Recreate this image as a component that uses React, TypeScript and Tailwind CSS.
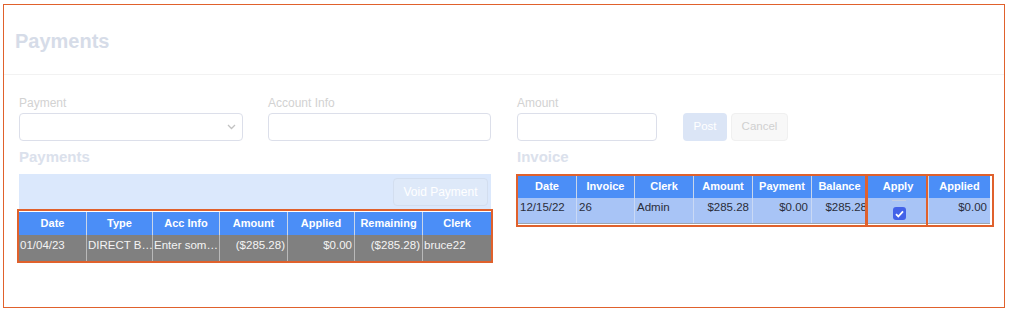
import React from "react";

type Col = { label: string; w: number; align?: "left" | "right" };

const payCols: Col[] = [
  { label: "Date", w: 67 },
  { label: "Type", w: 66 },
  { label: "Acc Info", w: 67 },
  { label: "Amount", w: 68, align: "right" },
  { label: "Applied", w: 67, align: "right" },
  { label: "Remaining", w: 68, align: "right" },
  { label: "Clerk", w: 69 },
];
const payRow = ["01/04/23", "DIRECT B…", "Enter som…", "($285.28)", "$0.00", "($285.28)", "bruce22"];

const invCols: Col[] = [
  { label: "Date", w: 58 },
  { label: "Invoice", w: 58 },
  { label: "Clerk", w: 59 },
  { label: "Amount", w: 59, align: "right" },
  { label: "Payment", w: 59, align: "right" },
  { label: "Balance", w: 56, align: "right" },
  { label: "Apply", w: 61 },
  { label: "Applied", w: 62, align: "right" },
];
const invRow = ["12/15/22", "26", "Admin", "$285.28", "$0.00", "$285.28", "", "$0.00"];

function Field({ label, width, chevron }: { label: string; width: number; chevron?: boolean }) {
  return (
    <div style={{ width }}>
      <div className="mb-[2px] text-[12px] leading-[16px] text-[#d2d2d2]">{label}</div>
      <div className="relative h-[28px] rounded-[4px] border border-[#dcdfea] bg-white">
        {chevron && (
          <svg className="absolute right-[6px] top-[10px]" width="9" height="6" viewBox="0 0 9 6" fill="none">
            <path d="M1 1l3.5 3.5L8 1" stroke="#c2c2c2" strokeWidth="1.3" />
          </svg>
        )}
      </div>
    </div>
  );
}

function Check() {
  return (
    <div className="flex h-[13px] w-[13px] items-center justify-center rounded-[3px] bg-[#4262e8]">
      <svg width="9" height="8" viewBox="0 0 9 8" fill="none">
        <path d="M1 4.2l2.3 2.3L8 1.3" stroke="white" strokeWidth="1.8" />
      </svg>
    </div>
  );
}

export default function App() {
  return (
    <div className="h-[312px] w-[1010px] bg-white font-['Liberation_Sans',Arial,sans-serif]">
      <div className="ml-[3px] mt-[4px] h-[304px] w-[1002px] border border-[#e0612c]">
        {/* header */}
        <div className="flex h-[70px] items-center border-b border-[#f2f2f2] pl-[11px] pt-[3px]">
          <h1 className="text-[20px] font-bold text-[#d6dce8]">Payments</h1>
        </div>

        <div className="flex gap-[26px] pl-[15px] pt-[20px]">
          {/* left column */}
          <div className="w-[472px]">
            <div className="flex gap-[25px]">
              <Field label="Payment" width={224} chevron />
              <Field label="Account Info" width={223} />
            </div>
            <h2 className="mt-[6px] text-[15px] font-bold leading-[20px] text-[#dbe1ec]">Payments</h2>
            <div className="mt-[7px] flex h-[37px] justify-end bg-[#dbe8fc] pr-[3px] pt-[4px]">
              <button className="h-[28px] w-[95px] rounded-[4px] border border-[#d3deef] bg-[#dee9f9] text-[12px] text-white">
                Void Payment
              </button>
            </div>
            <div className="relative bg-white pt-px">
              <div className="flex h-[23px] bg-[#4b8ef7]">
                {payCols.map((c, i) => (
                  <div
                    key={c.label}
                    style={{ width: c.w }}
                    className={
                      "flex items-center justify-center text-[11px] font-bold text-white" +
                      (i > 0 ? " border-l border-[#c9d6ea]" : "")
                    }
                  >
                    {c.label}
                  </div>
                ))}
              </div>
              <div className="flex h-[26px] bg-[#808080]">
                {payCols.map((c, i) => (
                  <div
                    key={c.label}
                    style={{ width: c.w }}
                    className={
                      "overflow-hidden whitespace-nowrap px-[1px] pt-[3px] text-[11.5px] leading-[14px] text-[#f4f4f4]" +
                      (c.align === "right" ? " pr-[2px] text-right" : "") +
                      (i > 0 ? " border-l border-[#b9b9b9]" : "")
                    }
                  >
                    {payRow[i]}
                  </div>
                ))}
              </div>
              <div className="absolute left-[-2px] top-[-2px] h-[54px] w-[476px] border-2 border-[#e0612c]" />
            </div>
          </div>

          {/* right column */}
          <div className="w-[475px]">
            <div className="flex items-end">
              <Field label="Amount" width={140} />
              <button className="ml-[26px] h-[28px] w-[44px] rounded-[4px] bg-[#dbe5f6] text-[11.5px] text-white">
                Post
              </button>
              <button className="ml-[4px] h-[28px] w-[57px] rounded-[4px] border border-[#f0f0f0] bg-[#f8f8f8] text-[11.5px] text-[#d0d0d0]">
                Cancel
              </button>
            </div>
            <h2 className="mt-[6px] text-[15px] font-bold leading-[20px] text-[#dbe1ec]">Invoice</h2>
            <div className="relative ml-px mt-[9px] w-[472px]">
              <div className="flex h-[22px] bg-[#4b8ef7]">
                {invCols.map((c, i) => (
                  <div
                    key={c.label}
                    style={{ width: c.w }}
                    className={
                      "flex items-center justify-center pb-px text-[11px] font-bold text-white" +
                      (i > 0 ? " border-l border-[#c9d6ea]" : "")
                    }
                  >
                    {c.label}
                  </div>
                ))}
              </div>
              <div className="flex h-[26px] border-b border-[#9da3ad] bg-[#a8c4f6]">
                {invCols.map((c, i) => (
                  <div
                    key={c.label}
                    style={{ width: c.w }}
                    className={
                      "overflow-hidden whitespace-nowrap pl-[2px] pt-[2px] text-[11.5px] leading-[14px] text-[#2a2d3a]" +
                      (c.align === "right" ? (c.label === "Balance" ? " text-right" : " pr-[3px] text-right") : "") +
                      (i > 0 ? " border-l border-[#cad9f5]" : "")
                    }
                  >
                    {c.label === "Apply" ? (
                      <div className="flex flex-col items-center">
                        <div className="h-px w-[14px] bg-[#c3cde2]" />
                        <div className="mt-[6px]">
                          <Check />
                        </div>
                      </div>
                    ) : (
                      invRow[i]
                    )}
                  </div>
                ))}
              </div>
              <div className="absolute left-[-2px] top-[-2px] h-[53px] w-[351px] border-2 border-[#e0612c]" />
              <div className="absolute left-[348px] top-[-2px] h-[53px] w-[62px] border-2 border-[#e0612c]" />
              <div className="absolute left-[408px] top-[-2px] h-[53px] w-[68px] border-2 border-[#e0612c]" />
            </div>
          </div>
        </div>
      </div>
    </div>
  );
}
